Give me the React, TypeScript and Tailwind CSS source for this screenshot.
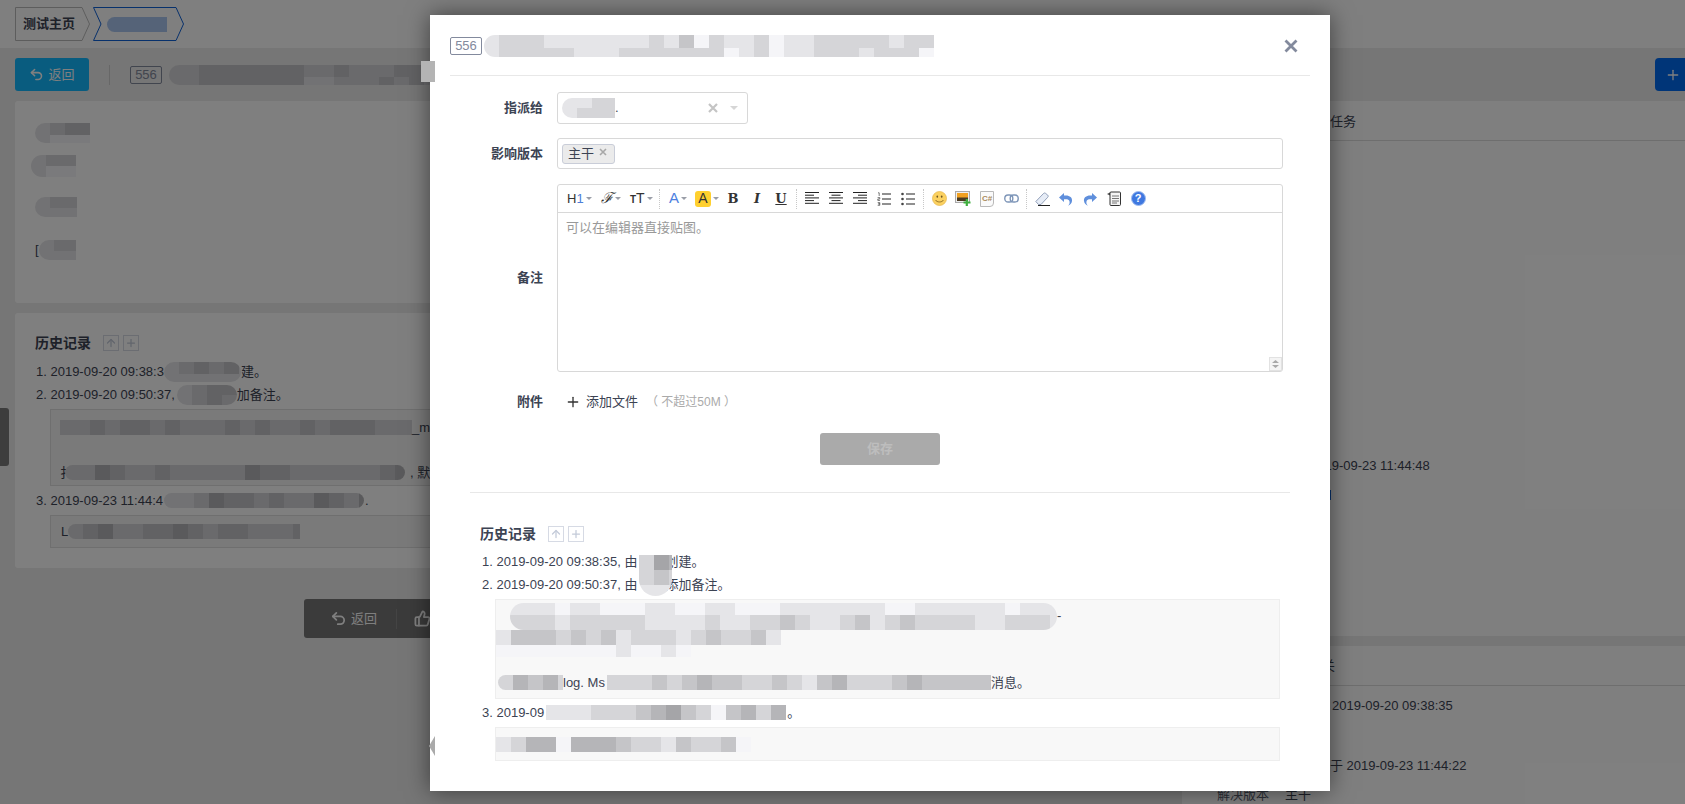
import { ReactNode } from "react";
import { Undo2, ThumbsUp, Plus, ArrowUp } from "lucide-react";

// pixelated smudges over the private text, one hex digit = grey level of a 15px cell
const Mosaic = ({ rows, h = [15], blue = false, className = "" }: { rows: string[]; h?: number[]; blue?: boolean; className?: string }) => (
  <div className={`inline-flex flex-col shrink-0 overflow-hidden ${className}`}>
    {rows.map((row, i) => (
      <div key={i} className="flex">
        {row.split("").map((c, j) => {
          const v = parseInt(c, 16) * 16 + 5;
          return (
            <div
              key={j}
              className="w-[15px] shrink-0"
              style={{
                height: h[i] ?? h[0],
                background: blue ? `rgb(${v - 10},${v + 18},${v + 60})` : `rgb(${v},${v},${v + 3})`,
              }}
            />
          );
        })}
      </div>
    ))}
  </div>
);

const Caret = () => (
  <svg width="6" height="3" viewBox="0 0 6 3" className="ml-[2px] shrink-0">
    <path d="M0 0h6L3 3z" fill="#9a9ea8" />
  </svg>
);

const Sep = () => <div className="w-px h-[20px] mx-[3px] border-l border-dotted border-[#c8c8c8] shrink-0" />;

const Tool = ({ children }: { children: ReactNode }) => (
  <div className="w-6 h-6 flex items-center justify-center shrink-0">{children}</div>
);

const Lines = ({ align }: { align: "l" | "c" | "r" }) => {
  const x = (w: number) => (align === "l" ? 0 : align === "c" ? (14 - w) / 2 : 14 - w);
  return (
    <svg width="14" height="13" viewBox="0 0 14 13">
      {[14, 9, 14, 9, 14].map((w, i) => (
        <rect key={i} x={x(w)} y={i * 2.7} width={w} height="1" fill="#222" />
      ))}
    </svg>
  );
};

const HistoryTitle = () => (
  <div className="flex items-center h-[18px]">
    <span className="font-bold text-[14px] w-[68px]">历史记录</span>
    <span className="w-4 h-4 -mt-px border border-[#d6dae4] flex items-center justify-center text-[#c3cad8]">
      <ArrowUp size={12} strokeWidth={2.5} />
    </span>
    <span className="w-4 h-4 -mt-px ml-1 border border-[#d6dae4] flex items-center justify-center text-[#c3cad8]">
      <Plus size={12} strokeWidth={2.5} />
    </span>
  </div>
);

const Tag = () => (
  <span className="w-8 h-[18px] border border-[#838a9d] rounded-[2px] text-[#838a9d] text-[13px] leading-[16px] text-center shrink-0">
    556
  </span>
);

const EditorToolbar = () => (
  <div className="h-[28px] flex items-center pl-[9px] border-b border-[#d8d8d8] text-[#333]">
    <div className="w-[33px] flex items-center text-[13px]">
      <span>H</span>
      <span className="text-[#4d7fd8]">1</span>
      <Caret />
    </div>
    <div className="w-[30px] flex items-center pl-[1px]">
      <span className="font-['DejaVu_Serif',serif] italic text-[15px] leading-none">ℱ</span>
      <Caret />
    </div>
    <div className="w-[29px] flex items-center">
      <span className="text-[10px] font-bold mt-[2px]">T</span>
      <span className="text-[14px]">T</span>
      <Caret />
    </div>
    <div className="w-px h-[20px] border-l border-dotted border-[#c8c8c8] shrink-0" />
    <div className="w-[26px] ml-[9px] flex items-center text-[15px] text-[#4d7fe0]">
      <span>A</span>
      <Caret />
    </div>
    <div className="w-[26px] flex items-center text-[14px]">
      <span className="w-4 h-4 rounded-[3px] bg-[#ffd02f] flex items-center justify-center">A</span>
      <Caret />
    </div>
    <Tool><span className="font-['DejaVu_Serif',serif] font-bold text-[13px]">B</span></Tool>
    <Tool><span className="font-['DejaVu_Serif',serif] font-bold italic text-[13px]">I</span></Tool>
    <Tool><span className="font-['DejaVu_Serif',serif] font-bold underline text-[13px]">U</span></Tool>
    <Sep />
    <Tool><Lines align="l" /></Tool>
    <Tool><Lines align="c" /></Tool>
    <Tool><Lines align="r" /></Tool>
    <Tool>
      <svg width="14" height="14" viewBox="0 0 14 14">
        <path d="M1 .8h1.2V4M.6 5.6h2.2v1.4H.8v1.4h2.2M.7 10.6h2.1v1.3H1.4h1.4v1.4H.7" fill="none" stroke="#444" strokeWidth=".7" />
        <rect x="5" y="1.5" width="9" height="1" fill="#222" />
        <rect x="5" y="6.5" width="9" height="1" fill="#222" />
        <rect x="5" y="11.5" width="9" height="1" fill="#222" />
      </svg>
    </Tool>
    <Tool>
      <svg width="14" height="14" viewBox="0 0 14 14">
        {[2, 7, 12].map((y) => (
          <g key={y}>
            <circle cx="1.5" cy={y} r="1.3" fill="#444" />
            <rect x="5" y={y - 0.5} width="9" height="1" fill="#222" />
          </g>
        ))}
      </svg>
    </Tool>
    <Sep />
    <Tool>
      <svg width="15" height="15" viewBox="0 0 15 15">
        <circle cx="7.5" cy="7.5" r="7" fill="#fbd160" stroke="#e5b64a" strokeWidth=".7" />
        <ellipse cx="5.3" cy="5.6" rx=".8" ry="1.2" fill="#6b5320" />
        <ellipse cx="9.7" cy="5.6" rx=".8" ry="1.2" fill="#6b5320" />
        <path d="M3.6 9c1 2.6 6.8 2.6 7.8 0" fill="none" stroke="#8a6a24" strokeWidth=".9" />
      </svg>
    </Tool>
    <Tool>
      <svg width="16" height="15" viewBox="0 0 16 15">
        <rect x=".5" y=".5" width="14" height="11" fill="#eee" stroke="#aaa" />
        <rect x="2" y="2" width="11" height="8" fill="#f0a020" />
        <rect x="2" y="6.5" width="11" height="3.5" fill="#4a3a20" />
        <path d="M11.8 8v7M8.5 11.5h7" stroke="#3fae3f" strokeWidth="2.2" />
      </svg>
    </Tool>
    <Tool>
      <div className="relative w-[14px] h-[16px] border border-[#b9b9b9] rounded-br-[4px] bg-[#fafafa] flex items-center justify-center text-[8px] font-bold text-[#a88a5c]">
        C#
      </div>
    </Tool>
    <Tool>
      <svg width="15" height="9" viewBox="0 0 15 9">
        <rect x=".8" y="1" width="8" height="7" rx="3.3" fill="none" stroke="#7d95b8" strokeWidth="1.4" />
        <rect x="6.2" y="1" width="8" height="7" rx="3.3" fill="none" stroke="#7d95b8" strokeWidth="1.4" />
      </svg>
    </Tool>
    <Sep />
    <Tool>
      <svg width="15" height="14" viewBox="0 0 15 14">
        <path d="M.8 9.5 8.5 1.5c.7-.7 1.6-.7 2.2 0l2 1.6c.7.7.7 1.5 0 2.2L6 12.5H3.5z" fill="#e6ecf6" stroke="#7a8aa8" strokeWidth=".8" />
        <rect x="3" y="13" width="12" height="1" fill="#222" />
      </svg>
    </Tool>
    <Tool>
      <svg width="14" height="14" viewBox="0 0 14 14">
        <path d="M0 5.500 5 1v2.600c5-.8 8.500 1.500 8 5.500-.3 2.400-2 4-4 4.600 1.400-1.200 2-3 1.400-4.800C9.900 7.300 7.800 6.900 5 7.300V10z" fill="#5f8fdc" />
      </svg>
    </Tool>
    <Tool>
      <svg width="14" height="14" viewBox="0 0 14 14">
        <path d="M14 5.500 9 1v2.600C4 2.800.5 5.100 1 9.100c.3 2.400 2 4 4 4.600-1.400-1.200-2-3-1.400-4.800C4.100 7.300 6.200 6.900 9 7.300V10z" fill="#5f8fdc" />
      </svg>
    </Tool>
    <Tool>
      <svg width="14" height="15" viewBox="0 0 14 15">
        <path d="M0 3 4 1v4z" fill="#444" />
        <rect x="3" y="1" width="10.500" height="13.500" rx="1" fill="#f4f4f4" stroke="#333" />
        <path d="M5 5h7M5 7.500h7M5 10h7M5 12h5" stroke="#555" strokeWidth=".8" />
      </svg>
    </Tool>
    <Tool>
      <div className="w-[15px] h-[15px] rounded-full bg-[#3f78e0] border border-[#9fbcf0] text-white text-[11px] font-bold leading-[13px] text-center">?</div>
    </Tool>
  </div>
);

const BackgroundPage = () => (
  <div className="flex flex-col h-[804px] bg-[#ececec]">
    {/* breadcrumb */}
    <div className="h-[48px] bg-white flex items-center pl-[15px] gap-[3px] shrink-0">
      <div className="relative w-[75px] h-[34px] flex items-center pl-2 font-bold text-[13px]">
        <svg className="absolute inset-0" width="75" height="34" viewBox="0 0 75 34">
          <path d="M.5.5H67L74.500 17 67 33.500H.5z" fill="none" stroke="#bbb" />
        </svg>
        测试主页
      </div>
      <div className="relative w-[91px] h-[34px] flex items-center pl-[12px]">
        <svg className="absolute inset-0" width="91" height="34" viewBox="0 0 91 34">
          <path d="M.5.5H83L90.500 17 83 33.500H.5L8 17z" fill="none" stroke="#0f62d8" />
        </svg>
        <Mosaic rows={["bbbb"]} h={[15]} blue className="rounded-l-full ml-[2px]" />
      </div>
    </div>

    {/* toolbar */}
    <div className="h-[53px] flex items-center pl-[15px] shrink-0">
      <div className="w-[74px] h-[33px] rounded-[3px] bg-[#12b8ff] text-white flex items-center justify-center gap-1 text-[13px]">
        <Undo2 size={15} strokeWidth={2.5} />
        返回
      </div>
      <div className="w-px h-[20px] bg-[#cfcfcf] ml-[20px] mr-[20px]" />
      <Tag />
      <Mosaic
        rows={["ddcccccccddcdddccdde", "ddccccccceedddcdcdee"]}
        h={[12, 8]}
        className="ml-[7px] rounded-l-full"
      />
      <div className="ml-auto w-[40px] h-[33px] rounded-l-[4px] bg-[#006af1] text-white flex items-center pl-[10px] translate-x-[10px]">
        <Plus size={16} />
      </div>
    </div>

    <div className="flex flex-1 min-h-0 pl-[15px] gap-[15px]">
      {/* left column */}
      <div className="w-[1152px] shrink-0">
        <div className="h-[202px] bg-white rounded-[3px] pl-5 flex flex-col">
          <Mosaic rows={["edcc", "efff"]} h={[12, 8]} className="mt-[22px] w-[55px] rounded-l-full" />
          <Mosaic rows={["edd", "eff"]} h={[11, 11]} className="mt-[12px] w-[45px] -ml-1 rounded-l-full" />
          <Mosaic rows={["edd", "eee"]} h={[11, 9]} className="mt-[20px] w-[42px] rounded-l-full" />
          <div className="mt-[23px] flex items-center h-[20px]">
            <span className="text-[13px]">[</span>
            <Mosaic rows={["edd", "eee"]} h={[11, 9]} className="w-[37px] rounded-l-full" />
          </div>
        </div>

        <div className="mt-[10px] h-[255px] bg-white rounded-[3px] pt-[21px] pl-5">
          <HistoryTitle />
          <div className="flex items-center h-[23px] mt-[8px] ml-px whitespace-nowrap">
            1. 2019-09-20 09:38:3
            <Mosaic rows={["edcdce", "eeeeee"]} h={[12, 8]} className="w-[77px] rounded-full" />
            建。
          </div>
          <div className="flex items-center h-[23px] ml-px whitespace-nowrap">
            2. 2019-09-20 09:50:37,
            <Mosaic rows={["edcc", "edcd"]} h={[10, 10]} className="w-[60px] ml-[2px] rounded-full" />
            加备注。
          </div>
          <div className="mt-[3px] h-[77px] ml-[15px] mr-5 border border-[#dedede] bg-[#f4f4f4] pl-[9px] pt-[10px]">
            <div className="flex items-center h-[15px] whitespace-nowrap">
              <Mosaic rows={["ddcdccdcdddcdcddcdcccddd"]} className="w-[352px]" />
              _ms
            </div>
            <div className="flex items-center h-[15px] mt-[30px] whitespace-nowrap">
              扌
              <Mosaic rows={["ddbcddcdddddbccddddddcbd"]} className="w-[340px] -ml-2 rounded-full" />
              <span className="ml-[5px]">, 默</span>
            </div>
          </div>
          <div className="flex items-center h-[23px] mt-[3px] ml-px whitespace-nowrap">
            3. 2019-09-23 11:44:4
            <Mosaic rows={["eedbccdcddbcdbc"]} className="w-[200px] ml-px rounded-full" />
            <span className="ml-px">.</span>
          </div>
          <div className="mt-[3px] h-[33px] ml-[15px] mr-5 border border-[#dedede] bg-[#f4f4f4] pl-[10px] flex items-center whitespace-nowrap">
            L
            <Mosaic rows={["dcbddccbcdccdddcd"]} className="w-[232px] rounded-l-full" />
          </div>
        </div>

        <div className="mt-[31px] w-[574px] mx-auto h-[39px] rounded-[3px] bg-[#767676] text-white flex items-center pl-[26px] text-[13px]">
          <Undo2 size={17} strokeWidth={2.5} />
          <span className="ml-1">返回</span>
          <div className="w-px h-[20px] bg-[#888] ml-[19px] mr-[17px]" />
          <ThumbsUp size={17} strokeWidth={2.5} />
        </div>
      </div>

      {/* right column */}
      <div className="flex-1 min-w-0 flex flex-col">
        <div className="h-[535px] bg-white shrink-0">
          <div className="h-[40px] border-b border-[#dcdcdc] pl-[148px] pt-[2px] flex items-center">任务</div>
          <div className="pl-[128px] mt-[315px] whitespace-nowrap">2019-09-23 11:44:48</div>
          <div className="ml-[148px] mt-[14px] w-px h-[10px] bg-[#0f62d8]" />
        </div>
        <div className="mt-[10px] flex-1 bg-white">
          <div className="h-[40px] border-b border-[#dcdcdc] pl-[140px] flex items-center">关</div>
          <div className="pl-[150px] mt-[10px] whitespace-nowrap">2019-09-20 09:38:35</div>
          <div className="pl-[148px] mt-[40px] whitespace-nowrap">于 2019-09-23 11:44:22</div>
          <div className="pl-[35px] mt-[10px] flex whitespace-nowrap">
            <span className="w-[68px] text-[#5b6272]">解决版本</span>
            主干
          </div>
        </div>
      </div>
    </div>

    {/* sidebar handle */}
    <div className="absolute left-0 top-[408px] w-[9px] h-[58px] rounded-r-[3px] bg-[#7a7a7a]" />
  </div>
);

const Modal = () => (
  <div className="absolute left-[430px] top-[15px] w-[900px] h-[776px] bg-white shadow-[0_0_22px_rgba(0,0,0,0.5)] overflow-hidden">
    {/* header */}
    <div className="mx-5 h-[61px] border-b border-[#e8e8e8] flex items-center pt-px">
      <Tag />
      <Mosaic
        rows={["edddeeeeeeedecfdeedfeedddddedd", "edddddeeedddddddfedfeedddedddf"]}
        h={[13, 9]}
        className="ml-[2px] rounded-l-full"
      />
      <svg width="14" height="14" viewBox="0 0 14 14" className="ml-auto mr-[12px] shrink-0">
        <path d="M1.500 1.500l11 11M12.500 1.500l-11 11" stroke="#838a9d" strokeWidth="2.800" />
      </svg>
    </div>

    {/* form */}
    <div className="flex items-center mt-4 h-[32px]">
      <label className="w-[113px] text-right font-bold">指派给</label>
      <div className="ml-[14px] w-[191px] h-full border border-[#d8d8d8] rounded-[3px] flex items-center pl-1">
        <Mosaic rows={["eedd", "eddd"]} h={[10, 10]} className="w-[53px] rounded-l-full" />
        <span>.</span>
        <svg width="10" height="10" viewBox="0 0 10 10" className="ml-auto shrink-0">
          <path d="M1 1l8 8M9 1L1 9" stroke="#c4c4c4" strokeWidth="2.200" />
        </svg>
        <svg width="8" height="4" viewBox="0 0 8 4" className="ml-3 mr-[9px] shrink-0">
          <path d="M0 0h8L4 4z" fill="#d6d6d6" />
        </svg>
      </div>
    </div>

    <div className="flex items-center mt-[14px] h-[31px]">
      <label className="w-[113px] text-right font-bold">影响版本</label>
      <div className="ml-[14px] w-[726px] h-full border border-[#d8d8d8] rounded-[3px] flex items-center pl-1">
        <span className="w-[53px] h-5 bg-[#ebebeb] border border-[#c9cdd8] rounded-[3px] flex items-center pl-[5px]">
          主干
          <svg width="8" height="8" viewBox="0 0 8 8" className="ml-[5px] -mt-1">
            <path d="M1 1l6 6M7 1L1 7" stroke="#a8a8a8" strokeWidth="1.600" />
          </svg>
        </span>
      </div>
    </div>

    <div className="flex items-center mt-[15px] h-[188px]">
      <label className="w-[113px] text-right font-bold">备注</label>
      <div className="relative ml-[14px] w-[726px] h-full border border-[#d8d8d8] rounded-[3px]">
        <EditorToolbar />
        <div className="pl-2 pt-[5px] text-[13px] text-[#999]">可以在编辑器直接贴图。</div>
        <div className="absolute right-0 bottom-0 w-[13px] h-[14px] bg-[#f4f4f4] border border-[#e2e2e2] flex flex-col items-center justify-center gap-[2px]">
          <svg width="7" height="3" viewBox="0 0 7 3"><path d="M0 3h7L3.500 0z" fill="#a8a8a8" /></svg>
          <svg width="7" height="3" viewBox="0 0 7 3"><path d="M0 0h7L3.500 3z" fill="#a8a8a8" /></svg>
        </div>
      </div>
    </div>

    <div className="flex items-center mt-4 h-[28px]">
      <label className="w-[113px] text-right font-bold">附件</label>
      <Plus size={16} strokeWidth={2} className="ml-[22px] text-[#333]" />
      <span className="ml-[5px]">添加文件</span>
      <span className="ml-2 text-[12px] text-[#aaa] whitespace-pre">（ 不超过50M ）</span>
    </div>

    <div className="mt-[17px] mx-auto w-[120px] h-[32px] rounded-[3px] bg-[#aaaaaa] text-[#bdbdbd] font-bold flex items-center justify-center">
      保存
    </div>

    <div className="mt-[27px] mx-10 h-px bg-[#e8e8e8]" />

    {/* history */}
    <div className="mt-[32px] pl-[50px]">
      <HistoryTitle />
      <div className="flex items-center h-[23px] mt-[7px] ml-[2px] whitespace-nowrap">
        1. 2019-09-20 09:38:35, 由
        <span className="relative w-[26px] h-full ml-[2px]">
          <Mosaic
            rows={["dab", "dcd", "eee"]}
            h={[15, 15, 11]}
            className="absolute left-0 top-[5px] w-[33px] rounded-b-full"
          />
        </span>
        创建。
      </div>
      <div className="flex items-center h-[23px] ml-[2px] whitespace-nowrap">
        2. 2019-09-20 09:50:37, 由
        <span className="w-[26px] ml-[2px]" />
        添加备注。
      </div>
      <div className="mt-[3px] ml-[15px] w-[785px] h-[100px] border border-[#eeeeee] bg-[#f8f8f8] whitespace-nowrap">
        <div className="flex items-start pl-[14px] pt-[3px] h-[30px]">
          <Mosaic
            rows={["eeefeefffeeffeefffeeeeeeeffeeeeeefeee", "dddedddddeeeedeeddcdeedcedcddddeeddde"]}
            h={[12, 15]}
            className="w-[547px] rounded-full"
          />
          <span className="mt-[3px]">-</span>
        </div>
        <Mosaic rows={["ecccdcdcedddedcddce", "ffffffffeffef......"]} h={[15, 12]} className="block" />
        <div className="flex items-center h-[15px] mt-[18px] pl-[2px]">
          <Mosaic rows={["dbcbd"]} className="w-[65px] rounded-l-full" />
          <span className="w-[44px]">log. Ms</span>
          <Mosaic rows={["dddcdcbccddcdecbdddcbccccc"]} className="w-[384px]" />
          消息。
        </div>
      </div>
      <div className="flex items-center h-[23px] mt-[2px] ml-[2px] whitespace-nowrap">
        3. 2019-09
        <Mosaic rows={["eeedddcbacdfcbdb"]} className="ml-[2px]" />
        <span className="ml-px">。</span>
      </div>
      <div className="mt-[3px] ml-[15px] w-[785px] h-[34px] border border-[#eeeeee] bg-[#f8f8f8] flex items-center">
        <Mosaic rows={["edbbfbbbcddecddcf"]} />
      </div>
    </div>
  </div>
);

const App = () => (
  <div className="relative w-full h-[804px] overflow-hidden text-[13px] text-[#3c4353] font-['Liberation_Sans','Noto_Sans_CJK_SC',sans-serif]">
    <BackgroundPage />
    <div className="absolute inset-0 bg-black/50" />
    <Modal />
    {/* smudges that spill over the modal edge */}
    <div className="absolute left-[421px] top-[61px] w-[14px] h-[21px] bg-[#b4b4b4]" />
    <div className="absolute left-[429px] top-[736px] w-[6px] h-[20px] bg-[#aaaaaa] [clip-path:polygon(100%_0,100%_100%,0_50%)]" />
  </div>
);

export default App;
